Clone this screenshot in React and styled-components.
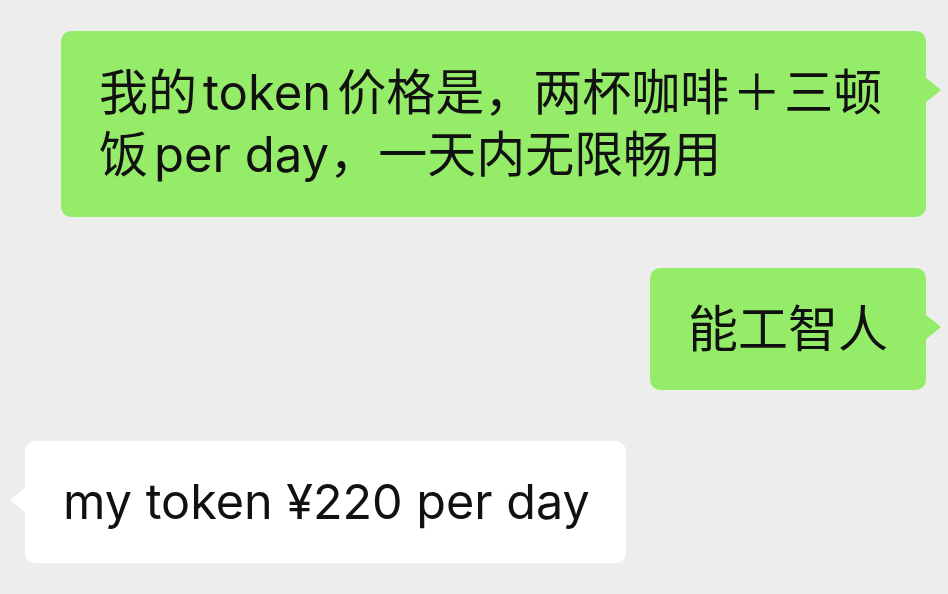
import React from 'react';
import styled, { createGlobalStyle } from 'styled-components';

const BG = '#ededed';
const GREEN = '#95ec69';
const WHITE = '#ffffff';
const INK = '#111111';

const GlobalStyle = createGlobalStyle`
    html, body {
        margin: 0;
        padding: 0;
        background: ${BG};
    }
    body {
        font-family: Inter, "Noto Sans CJK SC", sans-serif;
        -webkit-font-smoothing: antialiased;
    }
`;

const Chat = styled.div`
    width: 948px;
    height: 594px;
    box-sizing: border-box;
    padding: 31px 22px 0 25px;
    display: flex;
    flex-direction: column;
    gap: 51px;
    overflow: hidden;
    background: ${BG};
`;

const Row = styled.div`
    display: flex;
    justify-content: ${(p) => (p.mine ? 'flex-end' : 'flex-start')};
`;

const Bubble = styled.div`
    position: relative;
    box-sizing: border-box;
    width: ${(p) => p.width}px;
    padding: ${(p) => p.padY}px 38px;
    border-radius: 10px;
    background: ${(p) => (p.mine ? GREEN : WHITE)};
    color: ${INK};
    font-size: ${(p) => p.size}px;
    line-height: 62px;
    white-space: nowrap;

    &::after {
        content: '';
        position: absolute;
        top: 46px;
        width: 16px;
        height: 26px;
        background: inherit;
        ${(p) =>
            p.mine
                ? 'right: -15px; clip-path: polygon(0 0, 100% 50%, 0 100%);'
                : 'left: -15px; clip-path: polygon(100% 0, 0 50%, 100% 100%);'}
    }
`;

const Line = styled.div`
    display: block;
`;

// latin run inside chinese text, with the small auto spacing iOS adds
const Latin = styled.span`
    margin: 0 ${(p) => (p.tail ? 0 : 6)}px 0 6px;
`;

const Plus = styled.span`
    margin: 0 3px;
`;

const App = () => (
    <>
        <GlobalStyle />
        <Chat>
            <Row mine>
                <Bubble mine width={865} size={49} padY={31}>
                    <Line>
                        我的<Latin>token</Latin>价格是，两杯咖啡<Plus>＋</Plus>三顿
                    </Line>
                    <Line>
                        饭<Latin tail>per day</Latin>，一天内无限畅用
                    </Line>
                </Bubble>
            </Row>
            <Row mine>
                <Bubble mine width={276} size={50} padY={30}>
                    <Line>能工智人</Line>
                </Bubble>
            </Row>
            <Row>
                <Bubble width={601} size={48.5} padY={30}>
                    <Line>my token ¥220 per day</Line>
                </Bubble>
            </Row>
        </Chat>
    </>
);

export default App;
